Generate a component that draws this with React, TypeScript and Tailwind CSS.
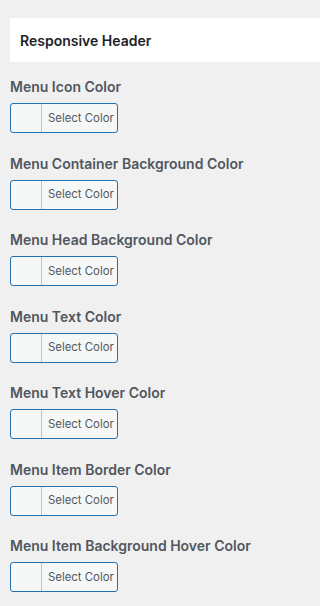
const labels = [
  "Menu Icon Color",
  "Menu Container Background Color",
  "Menu Head Background Color",
  "Menu Text Color",
  "Menu Text Hover Color",
  "Menu Item Border Color",
  "Menu Item Background Hover Color",
];

export default function App() {
  return (
    <div
      className="w-[320px] h-[606px] bg-[#f0f0f1] overflow-hidden pt-[18px] pl-[10px]"
      style={{ fontFamily: "Inter, 'Liberation Sans', sans-serif" }}
    >
      <div className="h-[44px] bg-white flex items-center pl-[10px]">
        <span className="text-[14px] font-semibold text-[#1d2327]">Responsive Header</span>
      </div>
      <div className="flex flex-col gap-[20.5px] mt-[15px]">
        {labels.map((l) => (
          <div key={l} className="flex flex-col">
            <div className="h-[20px] leading-[20px] text-[14px] font-semibold text-[#50575e]">{l}</div>
            <div className="mt-[6px] flex h-[30px] w-[108px] rounded-[3px] border border-[#2271b1] bg-[#f6f7f7] overflow-hidden">
              <div className="w-[31px] h-full border-r border-[#c3c4c7]" />
              <div className="flex-1 flex items-center pl-[6px] pt-[1px] text-[11.4px] text-[#50575e]">Select Color</div>
            </div>
          </div>
        ))}
      </div>
    </div>
  );
}
